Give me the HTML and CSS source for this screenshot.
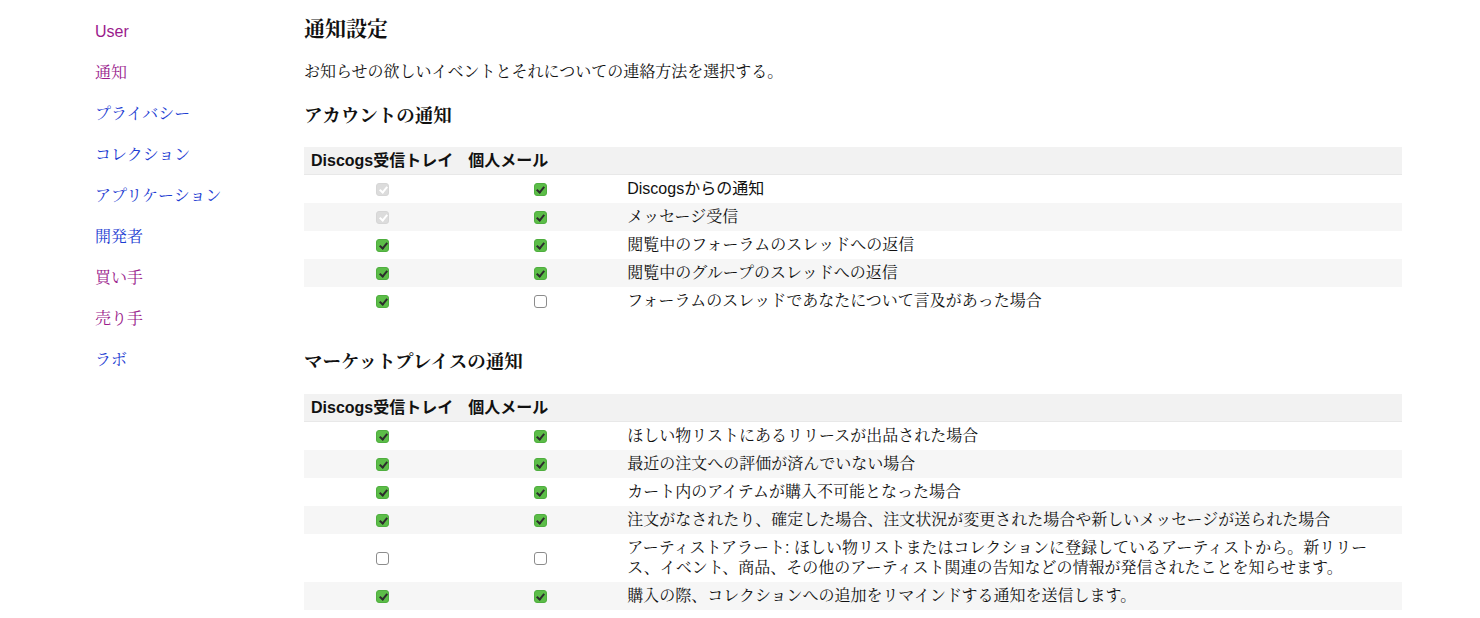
FILE: index.html
```html
<!DOCTYPE html>
<html lang="ja">
<head>
    <meta charset="UTF-8">
    <meta name="viewport" content="width=device-width, initial-scale=1.0">
    <title>通知設定</title>
    <link rel="stylesheet" href="styles.css">
</head>
<body>
    <div class="page">
        <nav class="side-nav">
            <a href="#" class="visited">User</a>
            <a href="#" class="visited">通知</a>
            <a href="#">プライバシー</a>
            <a href="#">コレクション</a>
            <a href="#">アプリケーション</a>
            <a href="#">開発者</a>
            <a href="#" class="visited">買い手</a>
            <a href="#" class="visited">売り手</a>
            <a href="#">ラボ</a>
        </nav>

        <main class="content">
            <h1>通知設定</h1>
            <p class="intro">お知らせの欲しいイベントとそれについての連絡方法を選択する。</p>

            <h2>アカウントの通知</h2>
            <table class="notify-table">
                <thead>
                    <tr>
                        <th class="col-inbox">Discogs受信トレイ</th>
                        <th class="col-mail">個人メール</th>
                        <th></th>
                    </tr>
                </thead>
                <tbody>
                    <tr>
                        <td class="check"><input type="checkbox" checked disabled></td>
                        <td class="check"><input type="checkbox" checked></td>
                        <td class="gothic">Discogsからの通知</td>
                    </tr>
                    <tr>
                        <td class="check"><input type="checkbox" checked disabled></td>
                        <td class="check"><input type="checkbox" checked></td>
                        <td>メッセージ受信</td>
                    </tr>
                    <tr>
                        <td class="check"><input type="checkbox" checked></td>
                        <td class="check"><input type="checkbox" checked></td>
                        <td>閲覧中のフォーラムのスレッドへの返信</td>
                    </tr>
                    <tr>
                        <td class="check"><input type="checkbox" checked></td>
                        <td class="check"><input type="checkbox" checked></td>
                        <td>閲覧中のグループのスレッドへの返信</td>
                    </tr>
                    <tr>
                        <td class="check"><input type="checkbox" checked></td>
                        <td class="check"><input type="checkbox"></td>
                        <td>フォーラムのスレッドであなたについて言及があった場合</td>
                    </tr>
                </tbody>
            </table>

            <h2 class="section-gap">マーケットプレイスの通知</h2>
            <table class="notify-table">
                <thead>
                    <tr>
                        <th class="col-inbox">Discogs受信トレイ</th>
                        <th class="col-mail">個人メール</th>
                        <th></th>
                    </tr>
                </thead>
                <tbody>
                    <tr>
                        <td class="check"><input type="checkbox" checked></td>
                        <td class="check"><input type="checkbox" checked></td>
                        <td>ほしい物リストにあるリリースが出品された場合</td>
                    </tr>
                    <tr>
                        <td class="check"><input type="checkbox" checked></td>
                        <td class="check"><input type="checkbox" checked></td>
                        <td>最近の注文への評価が済んでいない場合</td>
                    </tr>
                    <tr>
                        <td class="check"><input type="checkbox" checked></td>
                        <td class="check"><input type="checkbox" checked></td>
                        <td>カート内のアイテムが購入不可能となった場合</td>
                    </tr>
                    <tr>
                        <td class="check"><input type="checkbox" checked></td>
                        <td class="check"><input type="checkbox" checked></td>
                        <td>注文がなされたり、確定した場合、注文状況が変更された場合や新しいメッセージが送られた場合</td>
                    </tr>
                    <tr>
                        <td class="check"><input type="checkbox"></td>
                        <td class="check"><input type="checkbox"></td>
                        <td>アーティストアラート: ほしい物リストまたはコレクションに登録しているアーティストから。新リリース、イベント、商品、その他のアーティスト関連の告知などの情報が発信されたことを知らせます。</td>
                    </tr>
                    <tr>
                        <td class="check"><input type="checkbox" checked></td>
                        <td class="check"><input type="checkbox" checked></td>
                        <td>購入の際、コレクションへの追加をリマインドする通知を送信します。</td>
                    </tr>
                </tbody>
            </table>
        </main>
    </div>
</body>
</html>
```

FILE: styles.css
```css
body {
    margin: 0;
    padding: 0;
    background-color: #fff;
    color: #111;
    font-family: "Liberation Sans", "Noto Serif CJK JP", "Noto Sans CJK JP", serif;
    font-size: 16px;
}

.page {
    display: flex;
    padding: 17px 0 0 95px;
}

/* Menu on the left */
.side-nav {
    width: 209px;
    flex-shrink: 0;
    display: flex;
    flex-direction: column;
    gap: 21px;
    padding-top: 5px;
}

.side-nav a {
    line-height: 20px;
    font-size: 16px;
    color: #1c3cd2;
    text-decoration: none;
}

.side-nav a.visited {
    color: #9a1a8c;
}

/* Main column */
.content {
    width: 1098px;
}

h1 {
    margin: 0;
    font-size: 21px;
    line-height: 24px;
    font-weight: bold;
}

.intro {
    margin: 21px 0 0;
    line-height: 20px;
}

h2 {
    margin: 22px 0 19px;
    font-size: 18.5px;
    line-height: 24px;
    font-weight: bold;
}

h2.section-gap {
    margin-top: 35px;
    margin-bottom: 20px;
}

.notify-table {
    width: 100%;
    border-collapse: collapse;
}

.notify-table th {
    background-color: #f2f2f2;
    border-bottom: 1px solid #e8e8e8;
    text-align: left;
    font-family: "Liberation Sans", "Noto Sans CJK JP", sans-serif;
    font-weight: bold;
    padding: 4px 8px 3px 7px;
    line-height: 20px;
    white-space: nowrap;
}

.notify-table .col-inbox {
    width: 141px;
}

.notify-table .col-mail {
    width: 143px;
}

.notify-table td {
    padding: 4px 22px 4px 8px;
    line-height: 20px;
    vertical-align: middle;
}

.notify-table td.gothic {
    font-family: "Liberation Sans", "Noto Sans CJK JP", sans-serif;
}

.notify-table tbody tr:nth-child(even) td {
    background-color: #f6f6f6;
}

.notify-table td.check {
    text-align: center;
    padding: 4px 0;
}

/* Checkboxes */
.notify-table input[type="checkbox"] {
    appearance: none;
    -webkit-appearance: none;
    position: relative;
    width: 13px;
    height: 13px;
    margin: 0;
    vertical-align: middle;
    border: 1px solid #8c8c8c;
    border-radius: 3px;
    background-color: #fff;
}

.notify-table input[type="checkbox"]:checked {
    border-color: #4fae3f;
    background-color: #5cbd48;
}

.notify-table input[type="checkbox"]:checked::after {
    content: "";
    position: absolute;
    left: 3.5px;
    top: 1px;
    width: 3px;
    height: 6px;
    border: solid #2d2d2d;
    border-width: 0 2px 2px 0;
    transform: rotate(40deg);
}

.notify-table input[type="checkbox"]:disabled {
    border-color: #d6d6d6;
    background-color: #dcdcdc;
}

.notify-table input[type="checkbox"]:disabled::after {
    border-color: #fff;
}
```
